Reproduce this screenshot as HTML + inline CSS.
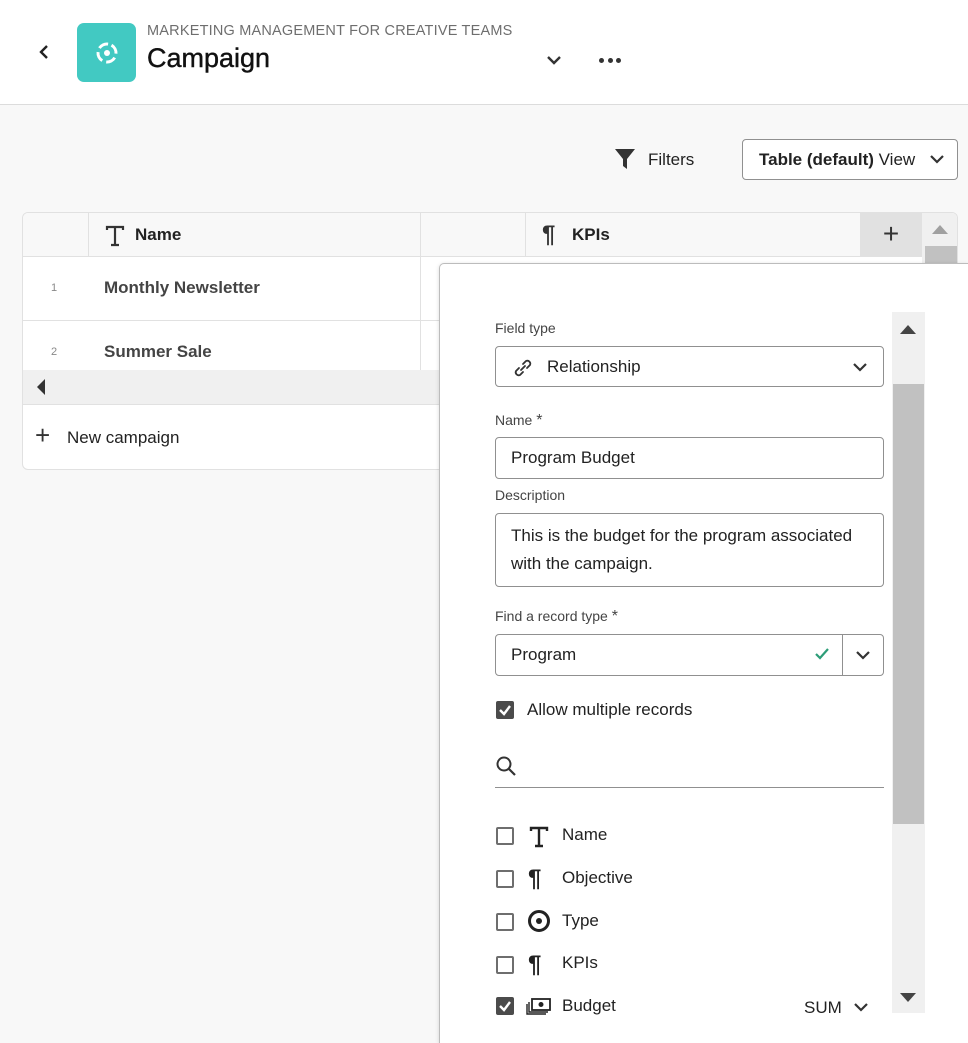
<!DOCTYPE html>
<html style="width:968px;height:1043px;overflow:hidden"><head><style>
*{box-sizing:border-box;margin:0;padding:0}
body{width:968px;height:1043px;overflow:hidden;background:#f8f8f8;font-family:"Liberation Sans",sans-serif;color:#222;position:relative}
.abs{position:absolute}
.hdr{left:0;top:0;width:968px;height:105px;background:#fff;border-bottom:1px solid #dcdcdc}
.lbl{font-size:14px;color:#444}
.box{border:1px solid #909090;border-radius:4px;background:#fff;font-size:17px;color:#222}
.cb{width:18px;height:18px;border:2px solid #6e6e6e;border-radius:2px;background:#fff}
.cbk{width:18px;height:18px;border-radius:2px;background:#4b4b4b}
.it{font-size:17px;color:#222}
</style></head><body>
<div class="abs hdr"></div>
<svg class="abs" style="left:38px;top:44px" width="12" height="16" viewBox="0 0 12 16"><path d="M9 2 L3 8 L9 14" stroke="#222" stroke-width="2.4" fill="none"/></svg>
<div class="abs" style="left:77px;top:23px;width:59px;height:59px;background:#42c9c2;border-radius:7px"></div>
<svg class="abs" style="left:92px;top:38px" width="30" height="30" viewBox="0 0 30 30"><circle cx="15" cy="15" r="9" stroke="#fff" stroke-width="3" fill="none" stroke-dasharray="10 4.2" transform="rotate(-60 15 15)"/><circle cx="15" cy="15" r="3" fill="#fff"/></svg>
<div class="abs" style="left:147px;top:23px;font-size:14.5px;color:#6e6e6e;letter-spacing:.2px">MARKETING MANAGEMENT FOR CREATIVE TEAMS</div>
<div class="abs" style="left:147px;top:43px;font-size:27px;color:#111;-webkit-text-stroke:.4px #111">Campaign</div>
<svg class="abs" style="left:546px;top:54px" width="16" height="12" viewBox="0 0 16 12"><path d="M2 3 L8 9 L14 3" stroke="#333" stroke-width="2.4" fill="none"/></svg>
<div class="abs" style="left:599px;top:58px;width:22px;height:5px;display:flex;justify-content:space-between"><i style="width:5px;height:5px;border-radius:50%;background:#333"></i><i style="width:5px;height:5px;border-radius:50%;background:#333"></i><i style="width:5px;height:5px;border-radius:50%;background:#333"></i></div>

<svg class="abs" style="left:614px;top:148px" width="22" height="22" viewBox="0 0 22 22"><path d="M1 1 H21 L13 11 V21 L9 18 V11 Z" fill="#333"/></svg>
<div class="abs" style="left:648px;top:150px;font-size:17px;color:#222">Filters</div>
<div class="abs" style="left:742px;top:139px;width:216px;height:41px;border:1px solid #909090;border-radius:4px;background:#fff;font-size:17px;padding:10px 0 0 16px"><b>Table (default)</b> View</div>
<svg class="abs" style="left:929px;top:153px" width="16" height="12" viewBox="0 0 16 12"><path d="M2 3 L8 9 L14 3" stroke="#333" stroke-width="2.2" fill="none"/></svg>

<div class="abs" style="left:22px;top:212px;width:936px;height:258px;background:#fff;border:1px solid #e1e1e1;border-radius:6px;overflow:hidden">
 <div class="abs" style="left:0;top:0;width:936px;height:44px;background:#f8f8f8;border-bottom:1px solid #e1e1e1"></div>
 <div class="abs" style="left:65px;top:0;width:1px;height:44px;background:#e1e1e1"></div>
 <div class="abs" style="left:397px;top:0;width:1px;height:157px;background:#e1e1e1"></div>
 <div class="abs" style="left:502px;top:0;width:1px;height:44px;background:#e1e1e1"></div>
 <svg class="abs" style="left:82px;top:12px" width="20" height="22" viewBox="0 0 20 22"><path d="M2 5 V2 H18 V5 M10 2 V20 M6 20 H14" stroke="#333" stroke-width="2.2" fill="none"/></svg>
 <div class="abs" style="left:112px;top:12px;font-size:17px;font-weight:bold;color:#222">Name</div>
 <div class="abs" style="left:519px;top:10px;font-size:24px;color:#333;line-height:24px;font-weight:bold">¶</div>
 <div class="abs" style="left:549px;top:12px;font-size:17px;font-weight:bold;color:#222">KPIs</div>
 <div class="abs" style="left:837px;top:0;width:62px;height:44px;background:#e1e1e1;font-size:28px;text-align:center;line-height:42px;color:#333">+</div>
 <div class="abs" style="left:899px;top:0;width:37px;height:258px;background:#f0f0f0"></div>
 <div class="abs" style="left:909px;top:12px;width:0;height:0;border-left:8px solid transparent;border-right:8px solid transparent;border-bottom:9px solid #a0a0a0"></div>
 <div class="abs" style="left:902px;top:33px;width:32px;height:40px;background:#c1c1c1"></div>
 <div class="abs" style="left:0;top:107px;width:936px;height:1px;background:#e1e1e1"></div>
 <div class="abs" style="left:28px;top:69px;font-size:11px;color:#888">1</div>
 <div class="abs" style="left:81px;top:65px;font-size:17px;font-weight:bold;color:#444">Monthly Newsletter</div>
 <div class="abs" style="left:28px;top:133px;font-size:11px;color:#888">2</div>
 <div class="abs" style="left:81px;top:129px;font-size:17px;font-weight:bold;color:#444">Summer Sale</div>
 <div class="abs" style="left:0;top:157px;width:899px;height:35px;background:#f0f0f0;border-bottom:1px solid #e1e1e1"></div>
 <div class="abs" style="left:14px;top:166px;width:0;height:0;border-top:8px solid transparent;border-bottom:8px solid transparent;border-right:8px solid #333"></div>
 <div class="abs" style="left:12px;top:209px;font-size:26px;color:#333;line-height:26px">+</div>
 <div class="abs" style="left:44px;top:215px;font-size:17px;color:#222">New campaign</div>
</div>

<div class="abs" style="left:439px;top:263px;width:529px;height:780px;background:#fff;border-left:1px solid #bcbcbc;border-top:1px solid #bcbcbc;border-top-left-radius:5px;box-shadow:0 1px 4px rgba(0,0,0,.15)"></div>
<div class="abs" style="left:892px;top:312px;width:33px;height:701px;background:#f0f0f0"></div>
<div class="abs" style="left:900px;top:325px;width:0;height:0;border-left:8px solid transparent;border-right:8px solid transparent;border-bottom:9px solid #444"></div>
<div class="abs" style="left:893px;top:384px;width:31px;height:440px;background:#c1c1c1"></div>
<div class="abs" style="left:900px;top:993px;width:0;height:0;border-left:8px solid transparent;border-right:8px solid transparent;border-top:9px solid #444"></div>

<div class="abs lbl" style="left:495px;top:320px">Field type</div>
<div class="abs box" style="left:495px;top:346px;width:389px;height:41px;padding:10px 0 0 51px">Relationship</div>
<svg class="abs" style="left:512px;top:357px" width="22" height="22" viewBox="0 0 22 22"><path d="M9 13 L13 9 M7 11 L4 14 A3 3 0 0 0 8 18 L11 15 M11 7 L14 4 A3 3 0 0 1 18 8 L15 11" stroke="#333" stroke-width="1.8" fill="none" stroke-linecap="round"/></svg>
<svg class="abs" style="left:852px;top:361px" width="16" height="12" viewBox="0 0 16 12"><path d="M2 3 L8 9 L14 3" stroke="#333" stroke-width="2.2" fill="none"/></svg>
<div class="abs lbl" style="left:495px;top:412px">Name <span style="font-size:16px">*</span></div>
<div class="abs box" style="left:495px;top:437px;width:389px;height:42px;padding:10px 0 0 15px">Program Budget</div>
<div class="abs lbl" style="left:495px;top:487px">Description</div>
<div class="abs box" style="left:495px;top:513px;width:389px;height:74px;padding:8px 15px;line-height:28px">This is the budget for the program associated with the campaign.</div>
<div class="abs lbl" style="left:495px;top:608px">Find a record type <span style="font-size:16px">*</span></div>
<div class="abs box" style="left:495px;top:634px;width:389px;height:42px;padding:10px 0 0 15px">Program</div>
<div class="abs" style="left:842px;top:635px;width:1px;height:40px;background:#909090"></div>
<svg class="abs" style="left:814px;top:646px" width="16" height="16" viewBox="0 0 16 16"><path d="M2 8 L6 12 L14 3" stroke="#2d9d78" stroke-width="2.2" fill="none"/></svg>
<svg class="abs" style="left:855px;top:649px" width="16" height="12" viewBox="0 0 16 12"><path d="M2 3 L8 9 L14 3" stroke="#333" stroke-width="2.2" fill="none"/></svg>
<div class="abs cbk" style="left:496px;top:701px"></div>
<svg class="abs" style="left:496px;top:701px" width="18" height="18" viewBox="0 0 18 18"><path d="M4 9 L8 13 L14 5" stroke="#fff" stroke-width="2.4" fill="none"/></svg>
<div class="abs it" style="left:527px;top:700px">Allow multiple records</div>
<svg class="abs" style="left:495px;top:755px" width="22" height="22" viewBox="0 0 22 22"><circle cx="9" cy="9" r="6.5" stroke="#333" stroke-width="2" fill="none"/><path d="M14 14 L20 20" stroke="#333" stroke-width="2.2"/></svg>
<div class="abs" style="left:495px;top:787px;width:389px;height:1px;background:#909090"></div>

<div class="abs cb" style="left:496px;top:827px"></div>
<svg class="abs" style="left:529px;top:826px" width="20" height="22" viewBox="0 0 20 22"><path d="M2 5 V2 H18 V5 M10 2 V20 M6 20 H14" stroke="#222" stroke-width="2.4" fill="none"/></svg>
<div class="abs it" style="left:562px;top:825px">Name</div>
<div class="abs cb" style="left:496px;top:870px"></div>
<div class="abs" style="left:528px;top:866px;font-size:24px;line-height:26px;font-weight:bold;color:#222">¶</div>
<div class="abs it" style="left:562px;top:868px">Objective</div>
<div class="abs cb" style="left:496px;top:913px"></div>
<div class="abs" style="left:528px;top:910px;width:22px;height:22px;border:3px solid #222;border-radius:50%"></div>
<div class="abs" style="left:536px;top:918px;width:6px;height:6px;background:#222;border-radius:50%"></div>
<div class="abs it" style="left:562px;top:911px">Type</div>
<div class="abs cb" style="left:496px;top:956px"></div>
<div class="abs" style="left:528px;top:952px;font-size:24px;line-height:26px;font-weight:bold;color:#222">¶</div>
<div class="abs it" style="left:562px;top:953px">KPIs</div>
<div class="abs cbk" style="left:496px;top:997px"></div>
<svg class="abs" style="left:496px;top:997px" width="18" height="18" viewBox="0 0 18 18"><path d="M4 9 L8 13 L14 5" stroke="#fff" stroke-width="2.4" fill="none"/></svg>
<svg class="abs" style="left:526px;top:997px" width="26" height="18" viewBox="0 0 26 18"><rect x="6" y="2" width="18" height="11" stroke="#222" stroke-width="1.8" fill="none"/><circle cx="15" cy="7.5" r="2.5" fill="#222"/><path d="M3 5 V15 H22 M1 7 V17 H20" stroke="#222" stroke-width="1.4" fill="none"/></svg>
<div class="abs it" style="left:562px;top:996px">Budget</div>
<div class="abs it" style="left:804px;top:998px">SUM</div>
<svg class="abs" style="left:853px;top:1001px" width="16" height="12" viewBox="0 0 16 12"><path d="M2 3 L8 9 L14 3" stroke="#333" stroke-width="2.2" fill="none"/></svg>
</body></html>
